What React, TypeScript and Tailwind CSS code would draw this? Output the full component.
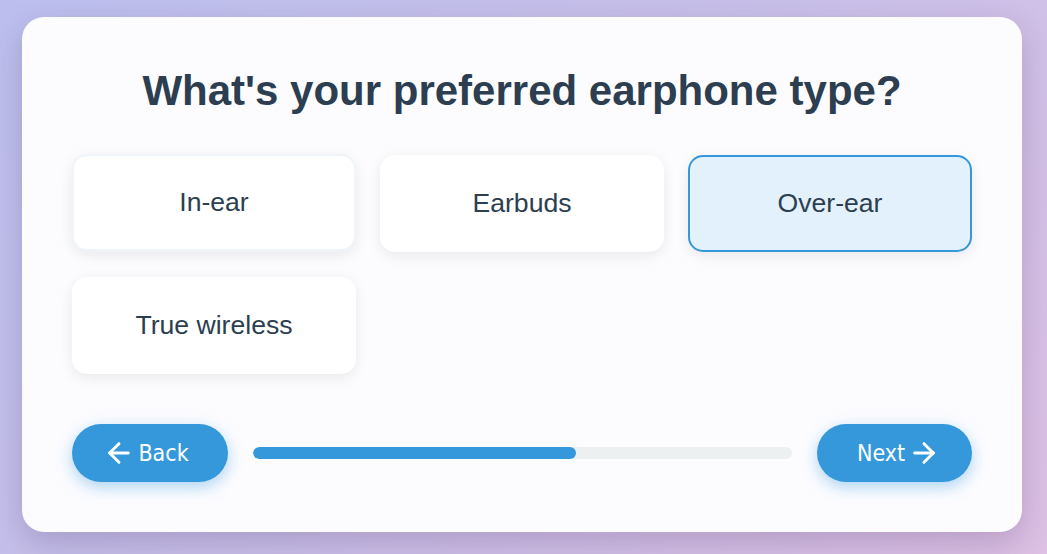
import React, { useState } from 'react';
import { ArrowLeft, ArrowRight } from 'lucide-react';

const options = ['In-ear', 'Earbuds', 'Over-ear', 'True wireless'];

export default function App() {
  const [selected, setSelected] = useState('Over-ear');
  const hovered = 'In-ear';
  const progress = 60;

  return (
    <div className="min-h-[554px] bg-[linear-gradient(135deg,#bcbfee_0%,#c9c0e9_50%,#dec1e4_100%)] pt-[17px] pl-[22px]">
      <div className="w-[1000px] rounded-[22px] bg-[#fcfcff] p-[50px] shadow-[0_12px_32px_rgba(60,30,90,0.22)]">
        <h1 className="mb-10 text-center font-['Liberation_Sans',Arial,sans-serif] text-[42px] leading-[48px] font-bold text-[#2c3e50]">
          What&apos;s your preferred earphone type?
        </h1>

        <div className="grid grid-cols-3 gap-x-6 gap-y-[25px]">
          {options.map(opt => (
            <button
              key={opt}
              onClick={() => setSelected(opt)}
              className={`flex h-[97px] items-center justify-center rounded-[15px] border-2 font-['Liberation_Sans',Arial,sans-serif] text-[26.6px] text-[#2c3e50] shadow-[0_4px_14px_rgba(0,0,0,0.08)] ${
                selected === opt
                  ? 'border-[#3498db] bg-[#e3f1fc]'
                  : opt === hovered
                    ? '-translate-y-px border-[#eff5fb] bg-white'
                    : 'border-transparent bg-white'
              }`}
            >
              {opt}
            </button>
          ))}
        </div>

        <div className="mt-[50px] flex items-center gap-[25px]">
          <button className="flex h-[58px] w-[156px] items-center justify-center gap-[3px] rounded-full bg-[#3498db] font-['DejaVu_Sans_Condensed','DejaVu_Sans',sans-serif] text-[23px] text-white shadow-[0_5px_16px_rgba(52,152,219,0.4)]">
            <ArrowLeft size={32} strokeWidth={2.2} className="-ml-2" />
            Back
          </button>
          <div className="h-3 flex-1 overflow-hidden rounded-full bg-[#ecf0f1]">
            <div className="h-full rounded-full bg-[#3498db]" style={{ width: `${progress}%` }} />
          </div>
          <button className="flex h-[58px] w-[155px] items-center justify-center gap-[3px] rounded-full bg-[#3498db] font-['DejaVu_Sans_Condensed','DejaVu_Sans',sans-serif] text-[23px] text-white shadow-[0_5px_16px_rgba(52,152,219,0.4)]">
            Next
            <ArrowRight size={32} strokeWidth={2.2} className="-mr-2" />
          </button>
        </div>
      </div>
    </div>
  );
}
